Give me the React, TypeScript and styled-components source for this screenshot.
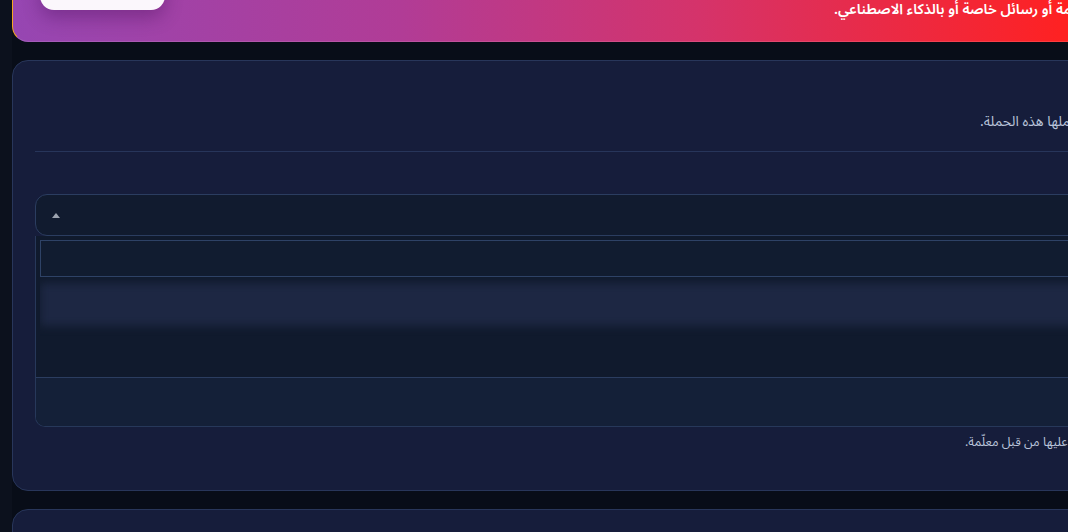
import React from "react";
import styled, { createGlobalStyle } from "styled-components";

const GlobalStyle = createGlobalStyle`
  *, *::before, *::after { box-sizing: border-box; }
  html, body {
    margin: 0;
    padding: 0;
    background: #080d18;
    overflow: hidden;
  }
  body {
    font-family: "Noto Sans Arabic", "Noto Sans", "DejaVu Sans", sans-serif;
    color: #e6eaf3;
  }
`;

const Shell = styled.div`
  display: flex;
  width: 100%;
  min-height: 100vh;
  overflow: hidden;
`;

const Rail = styled.aside`
  flex: none;
  width: 12px;
  background: #0c111d;
`;

const Main = styled.main`
  flex: none;
  width: 1400px;
  display: flex;
  flex-direction: column;
  gap: 18px;
  direction: rtl;
`;

/* ---------- announcement banner ---------- */

const Banner = styled.section`
  margin-top: -60px;
  height: 102px;
  padding: 26px 28px 0 27px;
  display: flex;
  align-items: flex-start;
  border-radius: 16px;
  border-left: 1px solid #f5a524;
  border-bottom: 1px solid rgba(255, 255, 255, 0.12);
  background: linear-gradient(
    90deg,
    #9646b2 0px,
    #b13c96 388px,
    #d5336a 688px,
    #ff2121 1056px,
    #ff2121 100%
  );
  color: #ffffff;
`;

const BannerText = styled.div`
  flex: 1;
  min-width: 0;
  display: flex;
  flex-direction: column;
`;

const BannerTitle = styled.h2`
  margin: 0;
  font-size: 20px;
  font-weight: 700;
  line-height: 28px;
`;

const BannerNote = styled.p`
  margin: 6px 0 0;
  font-size: 14.3px;
  font-weight: 600;
  line-height: 20px;
  white-space: nowrap;
  text-align: left;
  padding-left: 669px;
`;

const PreviewButton = styled.button`
  flex: none;
  width: 125px;
  height: 44px;
  border: none;
  border-radius: 14px;
  background: rgba(255, 255, 255, 0.96);
  box-shadow: 0 8px 18px rgba(50, 0, 70, 0.3);
  color: #8e3fae;
  font-family: inherit;
  font-size: 14px;
  font-weight: 700;
  cursor: pointer;
`;

/* ---------- form card ---------- */

const Card = styled.section<{ $minHeight?: number }>`
  background: #161d3b;
  border: 1px solid #28365a;
  border-radius: 16px;
  padding: 22px 22px 38px;
  min-height: ${(p) => (p.$minHeight ? `${p.$minHeight}px` : "auto")};
`;

const CardHeader = styled.header`
  padding-bottom: 19px;
  border-bottom: 1px solid #27355a;
`;

const CardTitle = styled.h3`
  margin: 0;
  font-size: 18px;
  font-weight: 700;
  line-height: 26px;
  color: #f1f4fa;
`;

const Muted = styled.p<{ $inset: number; $gap: number; $size: number }>`
  margin: ${(p) => p.$gap}px 0 0;
  font-size: ${(p) => p.$size}px;
  line-height: 20px;
  color: #b9c3d9;
  white-space: nowrap;
  text-align: left;
  padding-left: ${(p) => p.$inset}px;
`;

const Field = styled.div`
  margin-top: 16px;
  display: flex;
  flex-direction: column;
`;

const FieldLabel = styled.label`
  font-size: 14px;
  font-weight: 700;
  line-height: 18px;
  color: #dfe5f0;
`;

const SelectBox = styled.div`
  margin-top: 8px;
  height: 42px;
  padding: 0 16px;
  display: flex;
  align-items: center;
  justify-content: space-between;
  border: 1px solid #2b3d60;
  border-radius: 12px;
  background: #111b2f;
`;

const Placeholder = styled.span`
  font-size: 14px;
  color: #8a95ab;
`;

const Caret = styled.span`
  width: 0;
  height: 0;
  margin-top: 1px;
  border-left: 4px solid transparent;
  border-right: 4px solid transparent;
  border-bottom: 5px solid #9ca3af;
`;

const Panel = styled.div`
  border: 1px solid #27385a;
  border-top: none;
  border-radius: 0 0 10px 10px;
  background: #101a2d;
  overflow: hidden;
`;

const PanelBody = styled.div`
  padding: 4px 4px 0;
`;

const SearchInput = styled.input`
  display: block;
  width: 100%;
  height: 37px;
  margin: 0;
  padding: 0 10px;
  border: 1px solid #2e4266;
  border-radius: 0;
  background: #111c30;
  color: #dfe5f0;
  font-family: inherit;
  font-size: 13px;
  outline: none;
  &::placeholder {
    color: transparent;
  }
`;

const OptionList = styled.div`
  height: 100px;
  padding-top: 6px;
  overflow: hidden;
`;

const OptionSkeleton = styled.div`
  height: 43px;
  background: #1d2743;
  filter: blur(4px);
`;

const PanelFooter = styled.div`
  height: 49px;
  padding: 0 14px;
  display: flex;
  align-items: center;
  border-top: 1px solid #2b3d60;
  background: #142038;
  font-size: 13px;
  color: #9aa6bf;
`;

export default function App() {
  return (
    <>
      <GlobalStyle />
      <Shell>
        <Rail />
        <Main>
          <Banner>
            <BannerText>
              <BannerTitle>طريقة الإرسال</BannerTitle>
              <BannerNote>
                أرسلي الحملة عبر قناة عامة أو رسائل خاصة أو بالذكاء الاصطناعي.
              </BannerNote>
            </BannerText>
            <PreviewButton type="button">معاينة</PreviewButton>
          </Banner>

          <Card>
            <CardHeader>
              <CardTitle>الجمهور المستهدف</CardTitle>
              <Muted $inset={945} $gap={3} $size={14}>
                اختر الحلقات أو الطالبات التي ستشملها هذه الحملة.
              </Muted>
            </CardHeader>

            <Field>
              <FieldLabel>الحلقات</FieldLabel>
              <SelectBox>
                <Placeholder>اختر الحلقات</Placeholder>
                <Caret />
              </SelectBox>
              <Panel>
                <PanelBody>
                  <SearchInput placeholder="ابحث" />
                  <OptionList>
                    <OptionSkeleton />
                  </OptionList>
                </PanelBody>
                <PanelFooter>تم اختيار 0</PanelFooter>
              </Panel>
              <Muted $inset={930} $gap={5} $size={12.5}>
                لن تُرسل الرسائل إلا بعد الموافقة عليها من قبل معلّمة.
              </Muted>
            </Field>
          </Card>

          <Card $minHeight={200}>
            <CardHeader>
              <CardTitle>محتوى الرسالة</CardTitle>
            </CardHeader>
          </Card>
        </Main>
      </Shell>
    </>
  );
}
